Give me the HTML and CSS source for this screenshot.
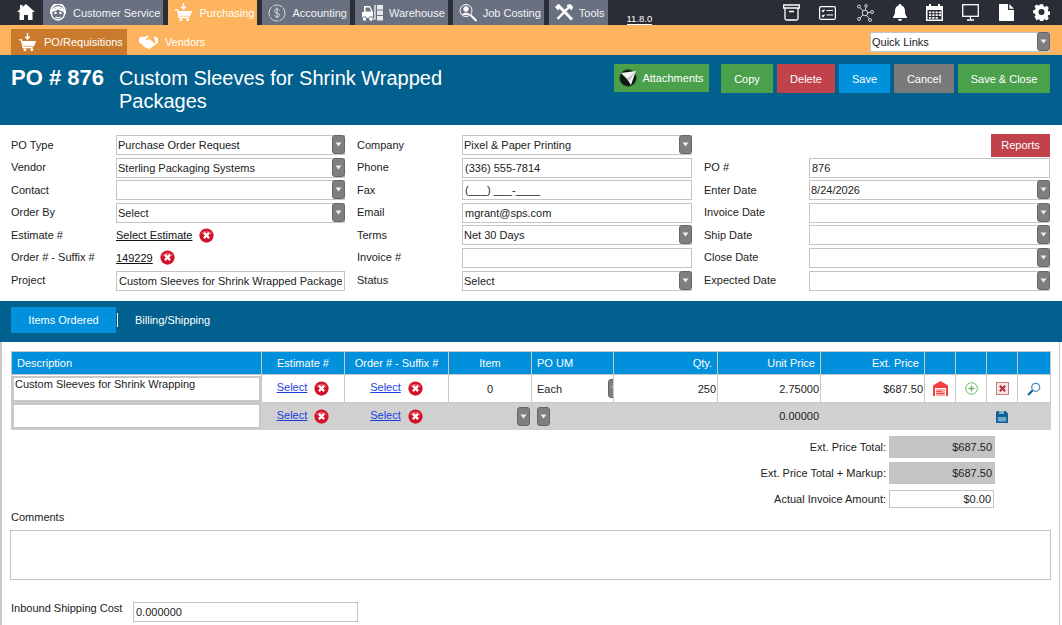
FILE: index.html
```html
<!DOCTYPE html>
<html lang="en">
<head>
  <meta charset="UTF-8">
  <meta name="viewport" content="width=device-width, initial-scale=1.0">
  <title>PO # 876</title>
  <link rel="stylesheet" href="styles.css">
</head>
<body>
  <svg class="sprites" width="0" height="0">
    <symbol id="i-cart" viewBox="0 0 22 22">
      <path d="M11 0v6M8.5 4l2.5 3 2.5-3" fill="none" stroke="#fff" stroke-width="1.6"/>
      <path d="M1 8h3l2 9h11M5 10h15l-2 5H6z" fill="none" stroke="#fff" stroke-width="1.5"/>
      <path d="M5.5 10.5h14l-1.8 4H6.5z" fill="#fff"/>
      <circle cx="8" cy="19.5" r="1.7" fill="#fff"/><circle cx="16" cy="19.5" r="1.7" fill="#fff"/>
    </symbol>
    <symbol id="i-x" viewBox="0 0 16 16">
      <circle cx="8" cy="8" r="7.6" fill="#d3122a"/>
      <path d="M2 6a6.5 5 0 0 1 12 0z" fill="#e8505f"/>
      <path d="M5.2 5.2l5.6 5.6M10.8 5.2l-5.6 5.6" stroke="#fff" stroke-width="2.4"/>
    </symbol>
    <symbol id="i-arrow" viewBox="0 0 13 19">
      <rect x=".5" y=".5" width="12" height="18" rx="2.5" fill="#7f7f7f" stroke="#666"/>
      <path d="M3.5 7.5h6L6.5 11.5z" fill="#eee"/>
    </symbol>
  </svg>

  <div class="topbar">
    <a class="home">
      <svg width="18" height="16" viewBox="0 0 18 16"><path d="M9 0l9 8h-2.500v8H11v-5H7v5H2.500V8H0l3-2.700V1h2.500v2.100z" fill="#fff"/></svg>
    </a>
    <a class="nav-tab">
      <svg width="18" height="18" viewBox="0 0 18 18" fill="none" stroke="#fff" stroke-width="1.4"><circle cx="9" cy="9.500" r="6.500"/><path d="M2 10V7a7 7 0 0 1 14 0v3M3 6.500c3 0 5-1 6-2.500 1 1.500 3 2.500 6 2.500" stroke-width="1.800"/><path d="M6.500 13c1.500 1 3.500 1 5 0"/><circle cx="6.500" cy="9" r=".6" fill="#fff"/><circle cx="11.500" cy="9" r=".6" fill="#fff"/></svg>
      Customer Service
    </a>
    <a class="nav-tab active">
      <svg width="19" height="19"><use href="#i-cart"/></svg>
      Purchasing
    </a>
    <a class="nav-tab">
      <svg width="18" height="18" viewBox="0 0 18 18" fill="none" stroke="#d5d8dd"><circle cx="9" cy="9" r="8" stroke-dasharray="10 1"/><path d="M11.500 6.500C11 5.500 10 5 9 5 7.500 5 6.500 5.800 6.500 7s1 1.700 2.500 2 2.500.8 2.500 2-1 2-2.500 2c-1 0-2-.5-2.500-1.500M9 3.500v11"/></svg>
      Accounting
    </a>
    <a class="nav-tab">
      <svg width="22" height="18" viewBox="0 0 22 18"><path d="M1 8h2V2h6l3 6v6H1z" fill="#fff"/><path d="M4.500 3.500h3.800l2 4h-5.800z" fill="#697180"/><circle cx="3.500" cy="15" r="2.300" fill="#fff" stroke="#697180"/><circle cx="10" cy="15" r="2.300" fill="#fff" stroke="#697180"/><path d="M14 1v14h-2" stroke="#fff" stroke-width="1.200" fill="none"/><path d="M16 1h6v4.500h-6zM16 6.500h6V11h-6zM16 12h6v4.500h-6z" fill="#e8eaed"/></svg>
      Warehouse
    </a>
    <a class="nav-tab">
      <svg width="18" height="18" viewBox="0 0 18 18" fill="none" stroke="#fff"><circle cx="7" cy="6.500" r="6"/><circle cx="7" cy="5" r="2.300" fill="#fff"/><path d="M3.500 11c.5-2.500 6.500-2.500 7 0" fill="#fff"/><path d="M11.500 11l6 6" stroke-width="2"/></svg>
      Job Costing
    </a>
    <a class="nav-tab">
      <svg width="18" height="18" viewBox="0 0 18 18" fill="none" stroke="#fff"><path d="M3 1l14 14.500" stroke-width="3"/><path d="M15 2L2.500 15" stroke-width="2.500"/><path d="M12 1.500l4.500 4.500 1-3-2-2.500z" fill="#fff"/><path d="M0 3l3-3 3 3.500-3 3z" fill="#fff" stroke="none"/></svg>
      Tools
    </a>
    <a class="version">11.8.0</a>
    <div class="top-icons">
      <svg width="17" height="17" viewBox="0 0 17 17" fill="none" stroke="#fff" stroke-width="1.300"><path d="M.7 1h15.600v3H.7zM2 4v10.500a1.500 1.500 0 0 0 1.500 1.500h10a1.500 1.500 0 0 0 1.500-1.500V4M6 7.500h5" /></svg>
      <svg width="17" height="14" viewBox="0 0 17 14" fill="none" stroke="#fff" stroke-width="1.200"><rect x=".6" y=".6" width="15.800" height="12.800" rx="1.500"/><path d="M3 4.500l1 1 1.500-1.800M3 9.500l1 1 1.500-1.800M7.500 4.500h6.500M7.500 9h6.500"/></svg>
      <svg width="18" height="18" viewBox="0 0 18 18" fill="none" stroke="#d5d5d5"><circle cx="9" cy="9" r="2.800"/><circle cx="3" cy="2.500" r="1.500"/><circle cx="10" cy="1.800" r="1.300"/><circle cx="16" cy="8" r="1.500"/><circle cx="14" cy="16" r="1.500"/><circle cx="3" cy="15" r="1.500"/><path d="M4 3.600l3.200 3.400M9.800 3.100l-.3 3.100M14.500 8.300l-2.700.4M13.300 14.700l-2.800-3.400M4 14l3-3"/></svg>
      <svg width="14" height="17" viewBox="0 0 14 17" fill="#fff"><path d="M7 0a1.300 1.300 0 0 1 1.300 1.500C11 2.200 12 4.500 12 7c0 3 .6 4.500 2 6v1H0v-1c1.400-1.500 2-3 2-6 0-2.500 1-4.800 3.700-5.500A1.300 1.300 0 0 1 7 0zM5 15h4a2 2 0 0 1-4 0z"/></svg>
      <svg width="17" height="17" viewBox="0 0 17 17" fill="#fff"><path d="M0 2h3V0h2v2h7V0h2v2h3v15H0zM1.500 6v9.500h14V6z"/><path d="M3 7.500h2.200v1.800H3zM6.300 7.500h2.200v1.800H6.300zM9.600 7.500h2.200v1.800H9.600zM12.800 7.500H15v1.800h-2.200zM3 10.300h2.200v1.800H3zM6.300 10.300h2.200v1.800H6.300zM9.600 10.300h2.200v1.800H9.600zM12.800 10.300H15v1.800h-2.200zM6.300 13h2.200v1.800H6.300zM9.600 13h2.200v1.800H9.600zM3 13h2.200v1.800H3z"/></svg>
      <svg width="17" height="17" viewBox="0 0 17 17" fill="none" stroke="#fff" stroke-width="1.300"><rect x=".7" y=".7" width="15.600" height="11.600"/><path d="M8.500 12.500v3M5 16h7"/></svg>
      <svg width="15" height="17" viewBox="0 0 15 17" fill="#fff"><path d="M0 0h9v6h6v11H0zM10.300 0L15 4.700h-4.700z"/></svg>
      <svg width="17" height="17" viewBox="0 0 17 17"><path d="M6.800 0h3.400l.5 2.300 1.500.7 2-1.300 2.300 2.400-1.300 2 .6 1.500 2.200.5v3.400l-2.200.5-.6 1.500 1.300 2-2.300 2.400-2-1.300-1.500.6-.5 2.300H6.800l-.5-2.300-1.500-.6-2 1.300L.5 13.900l1.300-2-.6-1.500L-1 9.900V6.500l2.200-.5.600-1.500-1.300-2L2.800.1l2 1.300 1.500-.7z" fill="#fff" transform="translate(1 .3) scale(.9)"/><circle cx="8.500" cy="8" r="3" fill="#2a2d36"/></svg>
    </div>
  </div>

  <div class="subbar">
    <a class="sub-tab active">
      <svg width="19" height="19"><use href="#i-cart"/></svg>
      PO/Requisitions
    </a>
    <a class="sub-tab">
      <svg width="19" height="13" viewBox="0 0 19 13" fill="#fff"><path d="M0 2l3-1.500L5 1c2-1 3-1.200 5-.5l-3 2.500c-.6.800.4 1.600 1.400 1L10.500 3l5 4.500 1-.5L15 1.500l1-1L19 2v5l-2 1-5.500 4.500c-1 .7-2 .6-2.500-.3-1 .3-2-.2-2.300-1-1 .1-1.700-.5-1.900-1.300C3.500 9.800 3 9 3 8.300L0 6.500z"/></svg>
      Vendors
    </a>
    <div class="pick quick-links">
      <select><option>Quick Links</option></select>
      <svg class="pick-arrow" width="13" height="19"><use href="#i-arrow"/></svg>
    </div>
  </div>

  <div class="page-head">
    <h1>PO # 876</h1>
    <h2>Custom Sleeves for Shrink Wrapped Packages</h2>
    <div class="actions">
      <button class="btn btn-attach green">
        <svg width="18" height="18" viewBox="0 0 18 18"><circle cx="9" cy="9" r="8.500" fill="#10180f" stroke="#2f6d2f"/><path d="M2 4l15-2-5 14-4-6z" fill="#f2f2f2"/><path d="M8 10l9-8-7 10z" fill="#bdbdbd"/></svg>
        Attachments
      </button>
      <button class="btn btn-copy green">Copy</button>
      <button class="btn btn-delete red">Delete</button>
      <button class="btn btn-save blue">Save</button>
      <button class="btn btn-cancel grey">Cancel</button>
      <button class="btn btn-close green">Save &amp; Close</button>
    </div>
  </div>

  <div class="form">
    <div class="form-col col-a">
      <label>PO Type</label>
      <div class="pick"><select><option>Purchase Order Request</option></select><svg class="pick-arrow" width="13" height="19"><use href="#i-arrow"/></svg></div>
      <label>Vendor</label>
      <div class="pick"><select><option>Sterling Packaging Systems</option></select><svg class="pick-arrow" width="13" height="19"><use href="#i-arrow"/></svg></div>
      <label>Contact</label>
      <div class="pick"><select><option></option></select><svg class="pick-arrow" width="13" height="19"><use href="#i-arrow"/></svg></div>
      <label>Order By</label>
      <div class="pick"><select><option>Select</option></select><svg class="pick-arrow" width="13" height="19"><use href="#i-arrow"/></svg></div>
      <label>Estimate #</label>
      <div class="linked"><a class="link-dark">Select Estimate</a><svg width="15" height="15"><use href="#i-x"/></svg></div>
      <label>Order # - Suffix #</label>
      <div class="linked"><a class="link-dark">149229</a><svg width="15" height="15"><use href="#i-x"/></svg></div>
      <label>Project</label>
      <input class="field" value="Custom Sleeves for Shrink Wrapped Packages">
    </div>

    <div class="form-col col-b">
      <label>Company</label>
      <div class="pick"><select><option>Pixel &amp; Paper Printing</option></select><svg class="pick-arrow" width="13" height="19"><use href="#i-arrow"/></svg></div>
      <label>Phone</label>
      <input class="field" value="(336) 555-7814">
      <label>Fax</label>
      <input class="field" value="(___) ___-____">
      <label>Email</label>
      <input class="field" value="mgrant@sps.com">
      <label>Terms</label>
      <div class="pick"><select><option>Net 30 Days</option></select><svg class="pick-arrow" width="13" height="19"><use href="#i-arrow"/></svg></div>
      <label>Invoice #</label>
      <input class="field">
      <label>Status</label>
      <div class="pick"><select><option>Select</option></select><svg class="pick-arrow" width="13" height="19"><use href="#i-arrow"/></svg></div>
    </div>

    <div class="form-col col-c">
      <button class="btn btn-reports red">Reports</button>
      <label>PO #</label>
      <input class="field" value="876">
      <label>Enter Date</label>
      <div class="pick"><select><option>8/24/2026</option></select><svg class="pick-arrow" width="13" height="19"><use href="#i-arrow"/></svg></div>
      <label>Invoice Date</label>
      <div class="pick"><select><option></option></select><svg class="pick-arrow" width="13" height="19"><use href="#i-arrow"/></svg></div>
      <label>Ship Date</label>
      <div class="pick"><select><option></option></select><svg class="pick-arrow" width="13" height="19"><use href="#i-arrow"/></svg></div>
      <label>Close Date</label>
      <div class="pick"><select><option></option></select><svg class="pick-arrow" width="13" height="19"><use href="#i-arrow"/></svg></div>
      <label>Expected Date</label>
      <div class="pick"><select><option></option></select><svg class="pick-arrow" width="13" height="19"><use href="#i-arrow"/></svg></div>
    </div>
  </div>

  <div class="tab-strip">
    <a class="strip-tab active">Items Ordered</a>
    <a class="strip-tab">Billing/Shipping</a>
  </div>

  <div class="panel">
    <table class="items">
      <colgroup>
        <col style="width:250px"><col style="width:83px"><col style="width:104px"><col style="width:83px"><col style="width:82px">
        <col style="width:104px"><col style="width:103px"><col style="width:104px"><col style="width:31px"><col style="width:31px"><col style="width:31px"><col>
      </colgroup>
      <thead>
        <tr>
          <th class="left">Description</th><th>Estimate #</th><th>Order # - Suffix #</th><th>Item</th><th class="left">PO UM</th>
          <th class="right">Qty.</th><th class="right">Unit Price</th><th class="right">Ext. Price</th><th></th><th></th><th></th><th></th>
        </tr>
      </thead>
      <tbody>
        <tr class="row-item">
          <td class="desc"><textarea class="desc-box">Custom Sleeves for Shrink Wrapping</textarea></td>
          <td class="center"><a class="link">Select</a><svg width="15" height="15"><use href="#i-x"/></svg></td>
          <td class="center"><a class="link">Select</a><svg width="15" height="15"><use href="#i-x"/></svg></td>
          <td class="center">0</td>
          <td class="um"><div class="um-wrap">Each<svg class="um-arrow" width="13" height="19"><use href="#i-arrow"/></svg></div></td>
          <td class="right">250</td>
          <td class="right">2.75000</td>
          <td class="right">$687.50</td>
          <td class="center"><svg width="15" height="15" viewBox="0 0 15 15"><path d="M0 15V4.500L7.500 0 15 4.500V15h-2V7H2v8z" fill="#f0403c"/><path d="M3 8h9v7H3z" fill="#f9aaa5"/><path d="M3.500 10h5v1h-5zM3.500 12h8v1h-8z" fill="#f0403c"/></svg></td>
          <td class="center"><svg width="13" height="13" viewBox="0 0 13 13" fill="none" stroke="#71b56d"><circle cx="6.500" cy="6.500" r="5.800"/><path d="M3.500 6.500h6M6.500 3.500v6" stroke-width="1.400"/></svg></td>
          <td class="center"><svg width="13" height="13" viewBox="0 0 13 13"><rect x=".5" y=".5" width="12" height="12" fill="#f6e6e6" stroke="#c27b7f"/><path d="M3.800 3.800l5.400 5.400M9.200 3.800L3.800 9.200" stroke="#b8323d" stroke-width="2.200"/></svg></td>
          <td class="center"><svg width="14" height="14" viewBox="0 0 14 14" fill="none"><circle cx="8.700" cy="5.300" r="4" stroke="#4a8fc0" stroke-width="1.300"/><path d="M5.800 8.200L1 13" stroke="#0f6296" stroke-width="2"/></svg></td>
        </tr>
        <tr class="row-new">
          <td class="desc"><textarea class="desc-box"></textarea></td>
          <td class="center"><a class="link">Select</a><svg width="15" height="15"><use href="#i-x"/></svg></td>
          <td class="center"><a class="link">Select</a><svg width="15" height="15"><use href="#i-x"/></svg></td>
          <td class="item-pick"><svg width="13" height="19"><use href="#i-arrow"/></svg></td>
          <td class="um"><div class="um-wrap"><svg class="um-arrow" width="13" height="19"><use href="#i-arrow"/></svg></div></td>
          <td></td>
          <td class="right">0.00000</td>
          <td></td><td></td><td></td>
          <td class="center"><svg width="12" height="12" viewBox="0 0 12 12"><path d="M0 1.500A1.500 1.500 0 0 1 1.500 0h8L12 2.500V12H0z" fill="#0f6296"/><path d="M3 0h5v3H3z" fill="#7fb0cc"/><path d="M1.800 6h8.400v4.500H1.800z" fill="#6fa6c6"/></svg></td>
          <td></td>
        </tr>
      </tbody>
    </table>

    <div class="totals">
      <div class="total-row"><span>Ext. Price Total:</span><output class="total-box">$687.50</output></div>
      <div class="total-row"><span>Ext. Price Total + Markup:</span><output class="total-box">$687.50</output></div>
      <div class="total-row"><span>Actual Invoice Amount:</span><input class="field total-input" value="$0.00"></div>
    </div>

    <label class="comments-label">Comments</label>
    <textarea class="comments"></textarea>

    <div class="shipping">
      <label>Inbound Shipping Cost</label>
      <input class="field shipping-input" value="0.000000">
    </div>
  </div>
</body>
</html>
```

FILE: styles.css
```css
* { box-sizing: border-box; }
html, body { margin: 0; padding: 0; }
body { font-family: "Liberation Sans", Arial, sans-serif; font-size: 11px; color: #222; background: #fff; overflow: hidden; }
.sprites { position: absolute; }

/* top nav */
.topbar { display: flex; height: 25px; background: #2a2d36; color: #fff; }
.home { width: 43px; padding: 4px 0 0 17px; }
.nav-tab { display: flex; align-items: center; gap: 6px; padding: 0 3px 0 6px; margin-right: 5px; background: #697180; color: #f2f3f5; }
.nav-tab.active { background: #feb35e; color: #fff; }
.version { margin: 13px 0 0 14px; height: 12px; line-height: 11px; font-size: 9.5px; border-bottom: 1px solid #fff; align-self: flex-start; }
.top-icons { display: flex; align-items: center; justify-content: space-between; margin-left: auto; width: 279px; padding-right: 12px; }

/* orange sub nav */
.subbar { display: flex; align-items: flex-end; height: 30px; background: #feb35e; padding-left: 11px; color: #fff; }
.sub-tab { display: flex; align-items: center; gap: 7px; height: 26px; padding: 0 4px 0 7px; }
.sub-tab.active { background: #c97a2c; margin-right: 5px; }
.quick-links { width: 180px; height: 20px; margin: 0 12px 3px auto; }
.quick-links select { background: #d6d6d6; border-color: #999; color: #111; }

/* blue title band */
.page-head { display: flex; align-items: flex-start; height: 70px; background: #02608e; color: #fff; padding: 9px 12px 0 11px; }
.page-head h1 { margin: 0; width: 108px; font-size: 22px; line-height: 28px; font-weight: bold; }
.page-head h2 { margin: 0; width: 340px; font-size: 20px; line-height: 23px; font-weight: normal; padding-top: 3px; }
.actions { display: flex; margin-left: auto; gap: 4px; }
.btn { display: flex; align-items: center; justify-content: center; height: 29px; border: 0; padding: 0; color: #fff; font: inherit; }
.green { background: #4ba14b; }
.red { background: #c0424a; }
.blue { background: #0090dc; }
.grey { background: #7a7a7a; }
.btn-attach { width: 95px; height: 28px; gap: 5px; margin-right: 8px; }
.btn-copy { width: 52px; }
.btn-delete { width: 58px; }
.btn-save { width: 51px; }
.btn-cancel { width: 60px; }
.btn-close { width: 92px; }

/* header form */
.form { display: flex; gap: 12px; height: 176px; padding: 10px 12px 0 11px; }
.form-col { display: grid; grid-template-columns: 105px 1fr; grid-template-rows: repeat(7, 20px); row-gap: 2.6px; align-items: center; }
.col-a { width: 334px; }
.col-b { width: 335px; }
.col-c { width: 346px; }
label { line-height: 13px; }
.field { width: 100%; height: 20px; border: 1px solid #c4c4c4; padding: 0 2px; font: inherit; color: #222; background: #fff; outline: 0; }
.pick { position: relative; height: 20px; }
.pick select { appearance: none; width: 100%; height: 100%; border: 1px solid #c4c4c4; border-radius: 0; padding: 0 16px 0 1px; font: inherit; color: #222; background: #fff; }
.pick-arrow { position: absolute; top: 0; right: 0; }
.linked { display: flex; align-items: center; gap: 7px; }
.link-dark { color: #111; text-decoration: underline; }
.btn-reports { grid-column: 1 / 3; justify-self: end; width: 59px; height: 23px; }

/* items tab strip */
.tab-strip { display: flex; align-items: flex-start; height: 41px; background: #02608e; padding: 6px 0 0 11px; color: #fff; }
.strip-tab { height: 26px; line-height: 26px; text-align: center; }
.strip-tab.active { width: 105px; background: #0090dc; margin-right: 19px; position: relative; }
.strip-tab.active::after { content: ""; position: absolute; right: -2px; top: 6px; height: 14px; width: 1px; background: #fff; }

/* lower panel */
.panel { height: 283px; margin-right: 2px; padding: 9px 0 0 9px; border-left: 2px solid #c8c8c8; border-right: 1px solid #c8c8c8; }
.items { width: 1040px; table-layout: fixed; border-collapse: collapse; border: 1px solid #c8c8c8; }
.items th { height: 23px; padding: 0 5px; background: #0090dc; color: #fff; font-weight: normal; border: 1px solid #c8c8c8; border-width: 0 1px; }
.items th:first-child, .items th:last-child { border-left: 0; border-right: 0; }
.items td { padding: 0 1px; border: 1px solid #c8c8c8; }
.left { text-align: left; }
.right { text-align: right; }
.items th.right { padding-right: 5px; }
.center { text-align: center; }
.center svg { vertical-align: middle; }
.center .link + svg { margin-left: 7px; }
.link { color: #1a3fe0; text-decoration: underline; }
.row-item td { height: 28px; background: #fff; }
.row-new td { height: 27px; background: #d0d0d0; border-color: #d0d0d0; }
.row-new td.desc { background: #fff; }
.items td.desc { padding: 0; }
.desc-box { display: block; width: 100%; height: 26px; resize: none; border: 2px solid #c8c8c8; padding: 0 1px; font: inherit; color: #222; outline: 0; overflow: hidden; }
.items td.um { padding: 0 0 0 5px; }
.um-wrap { display: flex; align-items: center; justify-content: space-between; overflow: hidden; }
.um-arrow { flex: none; margin-right: -8px; }
.item-pick { text-align: right; }
.item-pick svg { vertical-align: middle; margin-right: 0; }

.totals { display: flex; flex-direction: column; align-items: flex-end; margin: 4px 64px 0 0; }
.total-row { display: flex; align-items: center; gap: 3px; height: 26px; }
.total-box { width: 106px; height: 22px; line-height: 22px; padding-right: 3px; text-align: right; background: #c4c4c4; }
.total-input { width: 105px; height: 18px; text-align: right; margin-right: 1px; }

.comments-label { display: block; margin-top: -1px; }
.comments { display: block; width: 1041px; height: 50px; margin: 6px 0 0 -1px; border: 1px solid #c4c4c4; resize: none; outline: 0; }
.shipping { display: flex; align-items: flex-start; margin-top: 22px; }
.shipping label { width: 121px; padding-top: 0; }
.shipping-input { width: 225px; margin-left: 1px; }
```
